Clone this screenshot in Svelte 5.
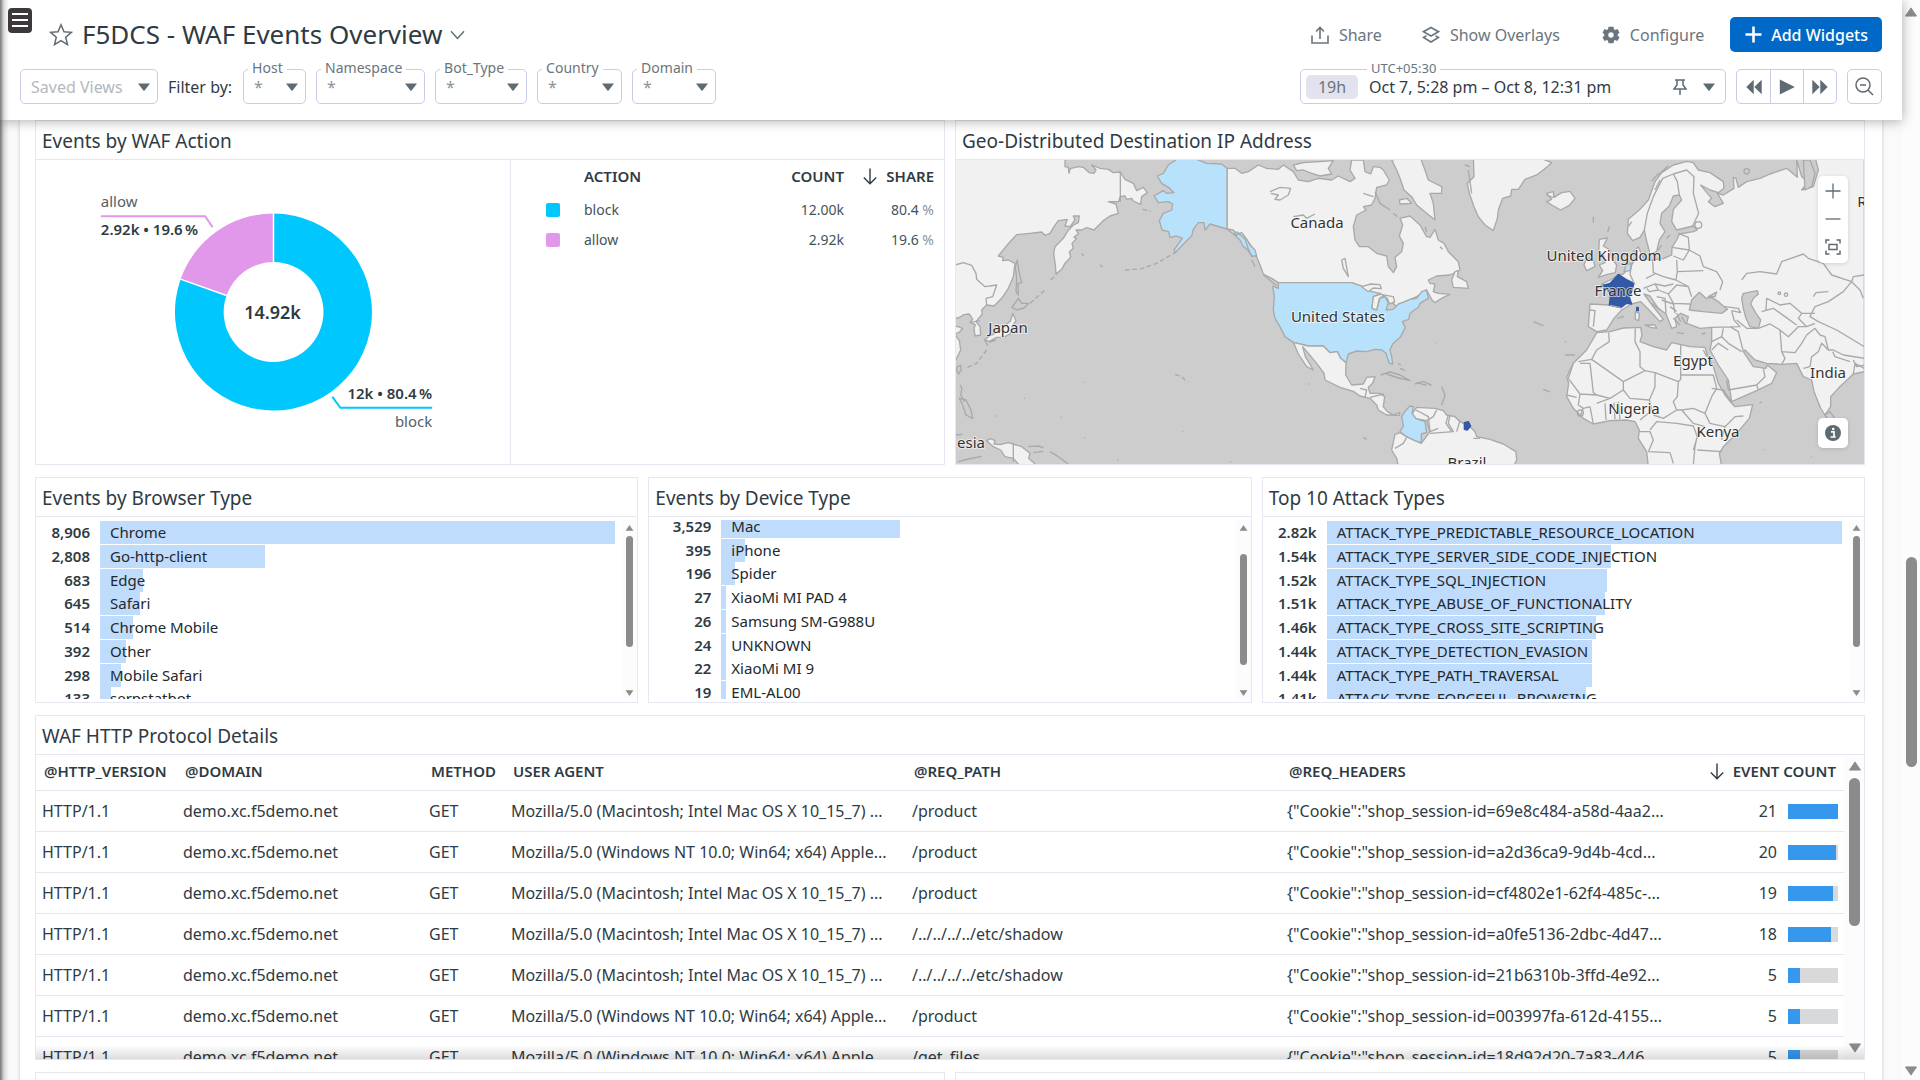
<script>
  const filters = [
    { name: 'Host', cls: 'w-host' },
    { name: 'Namespace', cls: 'w-namespace' },
    { name: 'Bot_Type', cls: 'w-bot' },
    { name: 'Country', cls: 'w-country' },
    { name: 'Domain', cls: 'w-domain' }
  ];

  const toplists = [
    {
      title: 'Events by Browser Type',
      cls: 'browser',
      items: [
        ['8,906', 'Chrome', 100],
        ['2,808', 'Go-http-client', 32],
        ['683', 'Edge', 8.3],
        ['645', 'Safari', 7.8],
        ['514', 'Chrome Mobile', 6.4],
        ['392', 'Other', 5.1],
        ['298', 'Mobile Safari', 4],
        ['133', 'serpstatbot', 2.2]
      ]
    },
    {
      title: 'Events by Device Type',
      cls: 'device',
      items: [
        ['3,529', 'Mac', 35.2],
        ['395', 'iPhone', 4.7],
        ['196', 'Spider', 2.7],
        ['27', 'XiaoMi MI PAD 4', 1],
        ['26', 'Samsung SM-G988U', 1],
        ['24', 'UNKNOWN', 1],
        ['22', 'XiaoMi MI 9', 1],
        ['19', 'EML-AL00', 1]
      ]
    },
    {
      title: 'Top 10 Attack Types',
      cls: 'attack',
      items: [
        ['2.82k', 'ATTACK_TYPE_PREDICTABLE_RESOURCE_LOCATION', 100],
        ['1.54k', 'ATTACK_TYPE_SERVER_SIDE_CODE_INJECTION', 55.2],
        ['1.52k', 'ATTACK_TYPE_SQL_INJECTION', 54.4],
        ['1.51k', 'ATTACK_TYPE_ABUSE_OF_FUNCTIONALITY', 54.1],
        ['1.46k', 'ATTACK_TYPE_CROSS_SITE_SCRIPTING', 52.2],
        ['1.44k', 'ATTACK_TYPE_DETECTION_EVASION', 51.4],
        ['1.44k', 'ATTACK_TYPE_PATH_TRAVERSAL', 51.4],
        ['1.41k', 'ATTACK_TYPE_FORCEFUL_BROWSING', 50.4]
      ]
    }
  ];

  const mac = 'Mozilla/5.0 (Macintosh; Intel Mac OS X 10_15_7) ...';
  const win = 'Mozilla/5.0 (Windows NT 10.0; Win64; x64) Apple...';
  const rows = [
    [mac, '/product', '69e8c484-a58d-4aa2...', 21],
    [win, '/product', 'a2d36ca9-9d4b-4cd...', 20],
    [mac, '/product', 'cf4802e1-62f4-485c-...', 19],
    [mac, '/../../../../etc/shadow', 'a0fe5136-2dbc-4d47...', 18],
    [mac, '/../../../../etc/shadow', '21b6310b-3ffd-4e92...', 5],
    [win, '/product', '003997fa-612d-4155...', 5],
    [win, '/get_files', '18d92d20-7a83-446...', 5]
  ];
  const cookie = '{"Cookie":"shop_session-id=';

  const labels = [
    ['Canada', 361, 68], ['United States', 382, 162], ['Japan', 52, 173], ['esia', 15, 288],
    ['United Kingdom', 648, 101], ['France', 662, 136], ['Egypt', 737, 206], ['India', 872, 218],
    ['Nigeria', 678, 254], ['Kenya', 762, 277], ['Brazil', 511, 308], ['Russia', 924, 47]
  ];
</script>

{#snippet caret()}
  <svg class="caret" width="12" height="8" viewBox="0 0 12 8" aria-hidden="true"><path d="M0 0.5h12L6.6 7.4a.8.8 0 0 1-1.2 0z" fill="#5f6b73" /></svg>
{/snippet}

{#snippet downArrow()}
  <svg class="sort" width="14" height="17" viewBox="0 0 14 17" aria-hidden="true"><path d="M7 0.5v15M0.8 9.6L7 15.8l6.200-6.200" fill="none" stroke="#2f3b44" stroke-width="1.400" /></svg>
{/snippet}

{#snippet bar(cls)}
  <div class="sbar {cls}" aria-hidden="true">
    <svg viewBox="0 0 10 8"><path d="M5 0.6L9.600 7.400H0.4z" fill="#8b8b8b" stroke="#8b8b8b" stroke-width=".8" stroke-linejoin="round" /></svg>
    <div class="track"><div class="thumb"></div></div>
    <svg viewBox="0 0 10 8"><path d="M5 7.400L9.600 0.6H0.4z" fill="#8b8b8b" stroke="#8b8b8b" stroke-width=".8" stroke-linejoin="round" /></svg>
  </div>
{/snippet}

<div class="page">
  <div class="app">
    <header>
      <button class="burger" aria-label="Menu">
        <svg width="24" height="25" viewBox="0 0 24 25"><rect width="24" height="25" rx="4" fill="#3d383c" /><path d="M4 6h16M4 12h16M4 18h16" stroke="#fff" stroke-width="2" /></svg>
      </button>
      <div class="bar1">
        <div class="heading">
          <svg width="24" height="24" viewBox="0 0 24 24" aria-hidden="true"><path d="M12 1.800l3 7 7.400.5-5.700 4.900 1.800 7.400L12 17.600l-6.500 4 1.800-7.400L1.600 9.300 9 8.800z" fill="none" stroke="#5f6b73" stroke-width="1.500" /></svg>
          <h1>F5DCS - WAF Events Overview</h1>
          <svg class="chev" width="15" height="10" viewBox="0 0 15 10" aria-hidden="true"><path d="M1 1.200l6.500 7.200L14 1.200" fill="none" stroke="#5f6b73" stroke-width="1.400" /></svg>
        </div>
        <div class="actions">
          <button class="ghost">
            <svg width="18" height="18" viewBox="0 0 18 18"><path d="M1 9.500V17h16V9.500M9 13V1.500M5 5.500l4-4 4 4" fill="none" stroke="currentColor" stroke-width="1.600" /></svg>
            Share
          </button>
          <button class="ghost g2">
            <svg width="18" height="18" viewBox="0 0 18 18"><path d="M9 1.500l7.500 4.200L9 10 1.500 5.700zM4.500 9.600l-3 1.900L9 16l7.500-4.500-3-1.900" fill="none" stroke="currentColor" stroke-width="1.600" /></svg>
            Show Overlays
          </button>
          <button class="ghost g3">
            <svg width="18" height="18" viewBox="0 0 18 18"><path fill-rule="evenodd" fill="currentColor" d="M6.500 0.800h5l.5 2.400 1.100.7 2.400-.8 2 3.600-1.800 1.600v1.400l1.800 1.600-2 3.600-2.400-.8-1.100.7-.5 2.400h-5L6 14.800l-1.100-.7-2.400.8-2-3.600 1.800-1.600V8.300L.5 6.700l2-3.600 2.400.8L6 3.200zM9 6.300a2.700 2.700 0 1 0 0 5.400 2.700 2.700 0 0 0 0-5.400z" /></svg>
            Configure
          </button>
          <button class="primary">
            <svg width="17" height="17" viewBox="0 0 17 17"><path d="M8.500 0.500v16M0.500 8.500h16" stroke="#fff" stroke-width="2.600" /></svg>
            Add Widgets
          </button>
        </div>
      </div>
      <div class="bar2">
        <div class="filters">
          <div class="field saved">
            <select aria-label="Saved Views"><option>Saved Views</option></select>
            {@render caret()}
          </div>
          <span class="by">Filter by:</span>
          {#each filters as f}
            <div class="field {f.cls}">
              <label for={f.name}>{f.name}</label>
              <select id={f.name}><option>*</option></select>
              {@render caret()}
            </div>
          {/each}
        </div>
        <div class="time">
          <div class="range">
            <span class="tz">UTC+05:30</span>
            <span class="dur">19h</span>
            <button class="dates">Oct 7, 5:28 pm – Oct 8, 12:31 pm</button>
            <button class="pin" aria-label="Pin time frame">
              <svg width="14" height="16" viewBox="0 0 14 16"><path d="M2 1h10M4 1v5L1 10h12L10 6V1M7 10v6" fill="none" stroke="#5f6b73" stroke-width="1.500" /></svg>
            </button>
            {@render caret()}
          </div>
          <div class="group">
            <button aria-label="Back"><svg width="16" height="16" viewBox="0 0 16 16"><path d="M7.700 0.800v14.400L0.300 8zM15.700 0.800v14.400L8.300 8z" fill="#5f6b73" /></svg></button>
            <button aria-label="Play"><svg width="16" height="16" viewBox="0 0 16 16"><path d="M0.800 0.500L15.800 8 0.800 15.500z" fill="#5f6b73" /></svg></button>
            <button aria-label="Forward"><svg width="16" height="16" viewBox="0 0 16 16"><path d="M0.300 0.800v14.400L7.700 8zM8.300 0.800v14.400L15.700 8z" fill="#5f6b73" /></svg></button>
          </div>
          <button class="zoom" aria-label="Zoom out">
            <svg width="19" height="19" viewBox="0 0 19 19"><path d="M8 1a7 7 0 1 1 0 14A7 7 0 0 1 8 1zM13 13l5 5M5 8h6" fill="none" stroke="#5f6b73" stroke-width="1.500" /></svg>
          </button>
        </div>
      </div>
    </header>

    <main>
      <div class="board">
        <div class="grid two">
          <section class="panel">
            <h2>Events by WAF Action</h2>
            <div class="waf">
              <svg class="donut" viewBox="0 0 475 304" role="img" aria-label="Events by action">
                <path d="M238 53.300A98.700 98.700 0 1 1 144.900 119.100L190.900 135.400A50 50 0 1 0 238 102z" fill="#00c8ff" />
                <path d="M144.900 119.100A98.700 98.700 0 0 1 238 53.300V102A50 50 0 0 0 190.900 135.400z" fill="#e198ea" />
                <path d="M238 52v50M144 118.800l47 16.600" stroke="#fff" stroke-width="1.500" />
                <path d="M65 56h104.500l7.500 11" fill="none" stroke="#e198ea" stroke-width="2" />
                <path d="M397 248h-92l-8-11" fill="none" stroke="#00c8ff" stroke-width="2" />
                <text class="name" x="65" y="47">allow</text>
                <text class="val" x="65" y="75">2.92k • 19.6&#8201;%</text>
                <text class="val end" x="397" y="239">12k • 80.4&#8201;%</text>
                <text class="name end" x="397" y="267">block</text>
                <text class="total" x="237" y="159">14.92k</text>
              </svg>
              <div class="legend">
                <table>
                  <thead>
                    <tr><th class="sw"></th><th class="l">ACTION</th><th class="cnt">COUNT</th><th class="shr">{@render downArrow()}SHARE</th></tr>
                  </thead>
                  <tbody>
                    <tr><td class="sw"><i class="cyan"></i></td><td class="l">block</td><td class="cnt">12.00k</td><td class="shr">80.4 <span>%</span></td></tr>
                    <tr><td class="sw"><i class="pink"></i></td><td class="l">allow</td><td class="cnt">2.92k</td><td class="shr">19.6 <span>%</span></td></tr>
                  </tbody>
                </table>
              </div>
            </div>
          </section>

          <section class="panel">
            <h2>Geo-Distributed Destination IP Address</h2>
            <div class="map">
              <svg viewBox="0 0 908 304" preserveAspectRatio="xMidYMid slice" role="img" aria-label="World map">
                <g class="land" transform="translate(-6 -10) scale(.33333)">
                  <path d="M0 20H345V50L355 52 357 70 361 56 385 50 400 52 418 68 432 70 438 60 425 45 450 55 475 58 490 68 511 66 525 88 550 100 560 122 580 112 592 128 575 140 572 163 550 153 545 145 530 148 525 138 511 140 505 155 475 155 498 162 505 190 480 198 460 212 432 240 410 233 395 240 378 240 386 250 372 262 380 265 366 280 370 295 358 305 362 322 345 340 335 358 318 372 316 345 311 310 315 290 340 265 352 245 370 225 385 218 388 198 370 198 375 210 360 230 345 228 352 208 325 212 312 230 300 250 285 256 275 246 240 250 200 254 180 275 145 318 160 322 158 332 175 330 195 340 190 380 175 415 155 445 132 468 110 465 95 480 97 492 78 515 90 530 92 555 75 558 72 535 76 524 60 517 68 508 58 492 42 494 25 504H0z" />
                  <path d="M0 530L25 530 38 536 26 548 14 552 28 572 32 600 20 625 10 640 0 650z" />
                  <path d="M188 490L198 512 186 530 180 552 160 562 140 562 118 574 104 570 115 560 152 542 168 525 182 512z" />
                  <path d="M110 872L122 866 135 872 132 882 150 884 175 878 190 882 215 890 240 910 236 925 262 948H210L190 925 165 920 152 900 130 890z" />
                  <path d="M831 55L855 55 875 70 895 65 925 45 950 55 985 58 1000 45 1030 65 1045 90 1075 95 1105 85 1145 90 1165 78 1200 95 1215 85 1200 60 1205 30 1240 30 1245 65 1262 72 1270 50 1290 52 1300 60 1318 90 1310 105 1280 112 1275 145 1265 165 1240 170 1248 180 1220 195 1210 230 1215 270 1228 290 1255 290 1280 310 1310 318 1315 350 1330 368 1340 350 1335 322 1355 305 1360 280 1348 258 1358 225 1350 205 1380 198 1410 225 1430 260 1440 262 1455 238 1465 270 1482 280 1495 305 1525 335 1530 360 1500 375 1460 378 1435 390 1440 400 1455 402 1450 425 1465 430 1500 433 1480 442 1455 458 1446 450 1430 420 1400 440 1365 455 1340 470 1310 440 1265 425 1205 398H985L965 385 940 372 930 345 920 320 905 290 880 255 831 237z" />
                  <path d="M1030 45L1060 38 1110 35 1150 32 1135 55 1145 72 1110 78 1085 70 1060 60 1040 62zM1380 20H1410L1425 60 1435 90 1475 110 1475 130 1440 130 1450 160 1455 210 1430 190 1400 165 1385 140 1362 120 1350 85 1340 60 1325 30zM1348 150L1370 145 1385 160 1350 162z" />
                  <path d="M1505 390L1515 365 1525 362 1522 380 1550 395 1555 415 1510 412z" fill="#d2d2d2" />
                  <path class="us" d="M655 45L680 28H740L770 40 815 42 831 55V237L800 228 780 222 765 240 762 218 745 218 730 238 725 258 710 272 695 288 675 308 672 300 697 265 680 258 660 262 656 245 636 240 628 212 640 190 665 180 668 162 655 155 625 158 612 138 640 122 650 130 672 128 655 112 635 100 622 78 640 70z" />
                  <path class="us" d="M831 237L850 240 858 256 875 248 890 268 900 285 915 300 920 318 905 318 892 298 880 290 870 270 850 252z" />
                  <path class="us" d="M985 398H1205L1235 408 1265 425 1292 430 1270 440 1266 475 1280 478 1290 445 1305 440 1315 458 1308 480 1330 478 1345 462 1365 455 1380 448 1400 445 1415 425 1430 420 1435 445 1410 460 1405 472 1380 490 1376 508 1357 515 1366 532 1352 560 1328 582 1320 600 1325 620 1328 642 1318 640 1308 610 1296 600 1275 598 1250 605 1220 603 1195 612 1188 638 1172 625 1162 605 1140 608 1120 588 1075 588 1030 577 1005 560 990 530 975 505 970 480 973 440 968 408 985 415z" />
                  <path d="M1235 410L1262 402 1290 404 1294 416 1270 414 1255 425zM1266 475L1270 440 1292 432 1302 436 1288 446 1280 480zM1296 434L1330 440 1334 456 1318 462 1312 445z" />
                  <path d="M1030 577L1075 588H1120L1140 608 1162 605 1172 625 1188 638 1187 675 1205 705 1240 702 1250 682 1275 680 1268 700 1255 712 1260 730 1290 730 1304 740 1300 770 1312 785 1330 795 1350 788 1348 796 1310 795 1285 780 1280 765 1260 745 1230 738 1210 724 1170 712 1125 690 1122 670 1100 640 1075 610 1058 590 1066 620 1090 660 1070 650 1045 612z" />
                  <path d="M1335 853L1350 848 1370 860 1395 872 1414 880 1440 845 1430 812 1398 806 1386 792 1400 772 1455 775 1480 782 1490 795 1515 800 1530 815 1560 830 1575 845 1580 860 1620 868 1660 882 1698 905 1700 930 1690 950H1345L1340 925 1325 900z" />
                  <path class="us" d="M1380 768L1366 782 1355 800 1360 828 1350 845 1370 860 1395 872 1414 878V852L1430 847 1425 815 1398 806 1386 790 1390 770z" />
                </g>
                <g class="line" transform="translate(-6 -10) scale(.33333)">
                  <path d="M511 66V155M15 345L40 338 65 346 78 370 80 388 105 410 140 405 128 440 108 445 110 465M60 517L90 512M190 882V935" />
                  <path d="M960 125L990 112 1022 115 1015 135 990 150 975 148 985 135 962 130M1030 200L1060 195 1070 205 1095 192M1175 330L1185 325 1195 380 1180 355zM1292 675L1320 666 1350 675 1380 692 1345 684 1310 672M1395 702L1420 694 1445 706M1345 640l8 5M1350 655l14 6M1275 125L1290 160 1320 180M1330 190l12 10M1240 130l30 10" />
                  <path d="M1230 715L1250 720 1245 742M1260 742L1302 732M1335 895L1360 880 1370 862M1460 780L1450 800 1430 812M1500 795L1495 820 1510 845 1440 850M1530 812L1520 845" />
                  <path d="M202 330L196 350 200 385 198 425 205 435 204 400 215 398 206 360zM205 445L215 460 236 460 222 474 200 480 186 472zM105 570l8 18M118 576l20-6M22 650l10-4 2 12-8 14-6-10zM30 705l6 10-4 20 12 20M28 745l20 5 15 30 5 25-20-10-10-30zM18 855l20-2M25 935l30-8 40-8M235 890l30-2 15 5M250 908l30-4M300 905l25 15 30 22M860 245l25 22 10 30 12 25M905 330l10 20M940 375l40 32M1240 862l10 6" stroke-width="6" />
                  <path d="M240 460L285 420M302 390L320 372M110 600L80 640 45 655M450 345l8 6M525 360L575 356 620 340 680 305M578 178l24 5M675 673L695 680 712 697M395 310l6 8M400 697h3M222 745h3M135 798h3M332 802h3M402 864h3M697 845h3M502 930h3M840 935h3M1076 702h3" stroke-dasharray="14 8" stroke-width="5" />
                </g>
                <g class="land" transform="translate(454 -10) scale(.33333)">
                  <path d="M190 20H380L425 38 410 52 380 75 345 88 325 118 305 118 302 138 278 145 265 180 262 205 250 242 225 225 205 200 192 170 178 130 172 100 192 80z" />
                  <path d="M410 130L430 125 432 142 455 128 480 124 495 145 478 166 452 180 425 165 410 155 425 148z" />
                  <path d="M568 268L592 264 580 288 600 300 605 325 620 345 616 368 590 374 565 382 578 362 568 345 585 338 582 318 566 308z" />
                  <path d="M528 328L548 322 555 350 530 362 522 345z" fill="#dedede" />
                  <path d="M1363 20H1215L1225 60 1210 110 1175 120 1195 95 1175 80 1160 30 1162 82 1130 55 1080 72 1050 85 1010 95 985 112 978 85 970 82 972 115 940 135 922 130 940 160 915 170 895 155 905 145 888 125 872 105 900 120 925 128 942 115 940 95 900 68 865 60 850 38 830 34 790 45 755 68 735 95 715 150 690 178 655 208 652 250 668 272 690 262 703 240 708 265 720 312 740 305 748 270 765 245 750 220 755 190 778 168 790 138 808 135 815 150 790 178 785 215 800 240 850 228 862 240 850 245 808 252 800 270 786 292 785 315 760 326 722 330 700 325 685 290 672 305 680 320 665 345 640 372 625 375 600 390 575 402 600 420 600 465 540 462 535 530 560 545 590 540 612 505 635 480 665 462 692 455 712 475 750 515 760 508 726 465 702 432 720 438 745 475 768 492 785 535 800 530 795 505 812 490 835 500 830 520 870 535 905 532 905 575 900 600 925 645 955 690 960 722 965 755 1040 722 1085 700 1100 668 1072 645 1068 655 1030 650 1000 605 1005 600 1035 630 1070 640 1115 643 1160 640 1180 680 1205 690 1212 725 1232 775 1245 795 1262 770 1262 740 1285 715 1330 672 1363 665z" />
                  <path d="M560 548L600 545 640 534 692 532 696 555 690 575 730 590 770 600 785 578 840 590 885 592 892 615 910 650 925 700 945 735 965 760 975 770 1028 764 1018 805 980 850 940 890 928 910 935 950H715L710 905 685 865 688 840 675 815 650 810 600 812 550 822 520 805 490 775 470 740 476 700 470 682 490 640 530 600z" />
                  <path d="M705 525l30 0 5 10-18-3zM676 485l12 5-2 22-10-4z" />
                  <path class="sea" d="M838 480L845 450 868 427 888 445 905 442 925 455 952 478 935 490 880 485zM895 440l25-14-5 14zM1000 430L1042 422 1045 432 1030 445 1022 462 1038 490 1052 510 1045 535 1020 530 1008 505 1000 475 995 445zM1180 30L1200 30 1215 70 1205 110 1185 120z" />
                  <path class="fr" d="M625 373L648 388 672 400 665 425 658 442 665 462 650 460 632 473 598 465 602 432 590 415 572 408 600 400zM680 472h5v10h-5zM163 818L175 815 182 828 172 840 163 838z" />
                  <path class="us" d="M648 345L664 340 660 362 642 365z" />
                </g>
                <g class="line" transform="translate(454 -10) scale(.33333)">
                  <path d="M703 240L712 190 730 140 758 85 790 72 802 95 808 135M790 72L830 60 852 80 850 130 866 190 848 228M805 250L835 262 838 300 820 330 790 318M786 292L838 300 870 318 880 350 920 365 938 395 930 420M800 330L802 365 880 362M728 330L730 368 760 380 798 390 802 365M708 385L735 372M665 345L660 372 672 400M700 415L735 402 745 420 718 425 710 415M735 402L765 408 790 402M745 420L775 432 800 405 835 410 845 440M775 432L790 460 840 462M740 440L765 445 768 490M755 450L790 462M790 460L795 490M540 480L555 482 550 530M600 466L632 473M835 410L798 390M945 470L985 475 992 488 965 482M965 482L972 510 990 530 905 532M940 535L935 560 905 575M935 560L955 580 995 605M960 530L985 545 1000 605M980 510L1010 535 1045 535M1045 535L1080 522 1110 540 1115 605 1125 625 1115 643M1110 540L1135 560 1165 530 1190 530 1215 520M1115 605L1155 608 1175 580 1190 555 1215 535 1230 555M1230 555L1245 560 1255 600 1235 580 1225 605 1205 620 1200 650 1180 655M1255 600L1270 600 1300 615 1363 625M1268 605L1275 620 1320 635M1330 630L1340 650 1363 645M1330 672L1335 640 1363 655M995 390L1010 370 1050 365 1100 372 1115 335 1180 312 1195 325 1240 340 1265 375 1325 395 1330 380 1363 375M1325 395L1350 420 1360 445M1325 395L1300 425 1255 455 1215 470 1200 500 1225 515 1280 540 1363 590M1068 480L1070 445 1110 465 1140 460 1175 490 1215 490M1055 485L1090 475 1125 500 1160 525M1175 490L1165 505 1190 530M1210 440L1218 428 1255 425" />
                  <path d="M596 548L598 575 560 600 545 628 505 635M540 640L550 728 560 735M510 640H540M545 628L640 695 705 662M640 695L640 720 600 745 560 735 510 732 475 685H475M490 640L475 685M676 535L675 575 690 605 690 650 705 662M705 662L735 668 805 695 812 688V585M812 675H910M735 668L735 710 718 750M640 720L660 745 718 750 725 775 715 790 690 810M805 695L802 740 790 755 800 780 760 805 730 795M910 675L920 715 905 740 885 790 850 775 815 780 800 780M905 715L940 720 965 755M885 790L900 820 945 830 975 800 1000 798M945 830L935 870M815 780L850 820 885 830M720 840L740 815 800 820 850 828 862 860 850 900M885 830L860 865 855 890 850 945M862 900L935 905M688 845L720 845 730 870 715 905M715 905L780 908 790 940M510 732L505 765 520 775 540 770M520 775L510 800M540 770L550 822M585 760L588 810M612 758L615 808M625 755L630 808M560 760L600 745M470 735L500 742M950 690L955 720 1040 705 1045 720M1040 705L1065 680 1060 655M905 600L925 580 955 600M880 600L890 620M18 780L55 800 60 845 85 835M115 795L108 820 125 845" />
                  <path d="M700 325l5-20M745 300l10-15M770 265l10-10M735 120l15-30M655 230l10-15M725 95l20-25M745 75l30-28M550 200v18M598 230l-5 15M410 135l20 8M90 290l8 8M45 230l5 15M622 505l20-6M800 548l22 3M875 552l12-3M800 490l12 25M790 505l20 20M815 500l12 22M780 470l20 14M725 460l25 20M20 698l30 8M95 710l10 25-10 30M465 615l30 0M400 718l20 8M370 515l30 12M465 575h3M75 578h3M190 865l20 0M175 60l10 70M165 45l15 5" stroke-width="5" />
                  <circle cx="1128" cy="434" r="5" /><circle cx="1108" cy="430" r="4" /><circle cx="1010" cy="64" r="8" /><circle cx="865" cy="225" r="10" /><circle cx="511" cy="789" r="9" /><path d="M1245 795l15-10 14 20-14 10zM1048 757h8M1062 899h3M1203 922h3" />
                </g>
                {#each labels as [t, x, y]}
                  <text {x} {y}>{t}</text>
                {/each}
              </svg>
              <div class="mapctl">
                <button aria-label="Zoom in"><svg width="16" height="16" viewBox="0 0 16 16"><path d="M8 .5v15M.5 8h15" stroke="#5f6b73" stroke-width="1.300" /></svg></button>
                <button aria-label="Zoom out map"><svg width="16" height="16" viewBox="0 0 16 16"><path d="M.5 8h15" stroke="#5f6b73" stroke-width="1.300" /></svg></button>
                <button aria-label="Fit map"><svg width="16" height="16" viewBox="0 0 16 16"><path d="M1 4.500V1h3.500M11.500 1H15v3.500M15 11.500V15h-3.500M4.500 15H1v-3.500M4 5.500h8v5H4z" fill="none" stroke="#5f6b73" stroke-width="1.500" /></svg></button>
              </div>
              <button class="info" aria-label="Map information">
                <svg width="16" height="16" viewBox="0 0 16 16"><circle cx="8" cy="8" r="8" fill="#5f6b73" /><path d="M6 6.800h3v5.200M5.500 12h5.200" fill="none" stroke="#fff" stroke-width="1.700" /><circle cx="8.200" cy="4" r="1.300" fill="#fff" /></svg>
              </button>
            </div>
          </section>
        </div>

        <div class="grid three">
          {#each toplists as l}
            <section class="panel">
              <h2>{l.title}</h2>
              <div class="top {l.cls}">
                <ul>
                  {#each l.items as [n, name, w]}
                    <li><b>{n}</b><div class="hbar"><i style:width="{w}%"></i><span>{name}</span></div></li>
                  {/each}
                </ul>
                {@render bar('small')}
              </div>
            </section>
          {/each}
        </div>

        <section class="panel">
          <h2>WAF HTTP Protocol Details</h2>
          <div class="details">
            <table>
              <colgroup><col class="c1" /><col class="c2" /><col class="c3" /><col class="c4" /><col class="c5" /><col class="c6" /><col class="c7" /></colgroup>
              <thead>
                <tr><th>@HTTP_VERSION</th><th>@DOMAIN</th><th>METHOD</th><th>USER AGENT</th><th>@REQ_PATH</th><th>@REQ_HEADERS</th><th class="num">{@render downArrow()}EVENT COUNT</th></tr>
              </thead>
              <tbody>
                {#each rows as [ua, path, id, n]}
                  <tr>
                    <td>HTTP/1.1</td><td>demo.xc.f5demo.net</td><td>GET</td><td>{ua}</td><td>{path}</td><td>{cookie}{id}</td>
                    <td><div class="count">{n}<span class="meter"><i style:width="{(n / 21) * 100}%"></i></span></div></td>
                  </tr>
                {/each}
              </tbody>
            </table>
            {@render bar('large')}
          </div>
        </section>

        <div class="grid two">
          <section class="panel"><div class="blank"></div></section>
          <section class="panel"><div class="blank"></div></section>
        </div>
      </div>
    </main>
  </div>
  {@render bar('pagebar')}
</div>

<style>
  :global(body) {
    margin: 0;
    background: #fff;
  }
  .page {
    display: flex;
    height: 100vh;
    overflow: hidden;
    font: 16px/24px 'Noto Sans', sans-serif;
    color: #2f3b44;
  }
  .page::before {
    content: '';
    position: absolute;
    inset: 0 auto 0 0;
    width: 9px;
    z-index: 5;
    background: linear-gradient(90deg, #0008, #0002 45%, #0000);
    pointer-events: none;
  }
  .app {
    flex: 1;
    min-width: 0;
    display: flex;
    flex-direction: column;
  }
  button, select {
    font: inherit;
    color: inherit;
    background: none;
    border: 0;
    padding: 0;
    margin: 0;
  }
  button {
    display: flex;
    align-items: center;
    justify-content: center;
    white-space: nowrap;
  }
  svg {
    display: block;
    flex: none;
  }
  header {
    position: relative;
    z-index: 3;
    box-sizing: border-box;
    height: 120px;
    padding: 17px 20px 0;
    display: flex;
    flex-direction: column;
    gap: 17px;
    background: #fff;
    box-shadow: 0 1px 12px #0005;
  }
  .burger {
    position: absolute;
    left: 8px;
    top: 8px;
    z-index: 6;
  }
  .bar1, .bar2, .heading, .actions, .filters, .time {
    display: flex;
    align-items: center;
  }
  .bar1, .bar2 {
    justify-content: space-between;
    height: 35px;
  }
  .heading {
    padding-left: 29px;
  }
  h1 {
    margin: 0 8px 0 9px;
    font-size: 26px;
    line-height: 35px;
    font-weight: 400;
  }
  .ghost {
    gap: 10px;
    color: #6a757d;
    margin-right: 40px;
  }
  .g2 {
    margin-right: 42px;
  }
  .g3 {
    margin-right: 26px;
  }
  .primary {
    gap: 9px;
    height: 35px;
    padding: 0 14px 0 15px;
    border-radius: 5px;
    background: #0068c6;
    color: #fff;
    font-weight: 500;
  }
  .filters {
    gap: 10px;
  }
  .by {
    margin-right: 1px;
  }
  .field {
    position: relative;
    height: 35px;
    box-sizing: border-box;
    border: 1px solid #c9cce6;
    border-radius: 5px;
    display: flex;
    align-items: center;
    padding: 0 7px 0 10px;
  }
  .field select {
    flex: 1;
    min-width: 0;
    appearance: none;
    color: #8a939a;
  }
  .field.saved select {
    color: #b3b8bc;
  }
  .field label, .tz {
    position: absolute;
    left: 4px;
    top: -14px;
    padding: 0 4px;
    background: #fff;
    font-size: 14px;
    color: #6a757d;
  }
  .tz {
    left: 66px;
    font-size: 13px;
  }
  .saved { width: 138px; }
  .w-host { width: 63px; }
  .w-namespace { width: 109px; }
  .w-bot { width: 92px; }
  .w-country { width: 85px; }
  .w-domain { width: 84px; }
  .time {
    gap: 10px;
  }
  .range {
    position: relative;
    box-sizing: border-box;
    width: 426px;
    height: 35px;
    border: 1px solid #c9cce6;
    border-radius: 5px;
    display: flex;
    align-items: center;
    padding: 0 10px 0 5px;
  }
  .dur {
    width: 52px;
    border-radius: 5px;
    background: #e2e3ee;
    color: #6a757d;
    text-align: center;
    margin-right: 11px;
  }
  .pin {
    margin: 0 16px 0 auto;
  }
  .group {
    display: flex;
    border: 1px solid #c9cce6;
    border-radius: 5px;
  }
  .group button {
    width: 33px;
    height: 33px;
  }
  .group button + button {
    border-left: 1px solid #c9cce6;
  }
  .zoom {
    width: 35px;
    height: 35px;
    border: 1px solid #c9cce6;
    border-radius: 5px;
  }
  main {
    flex: 1;
    min-height: 0;
    overflow: hidden;
    background: #fafafa;
    padding: 0 20px;
  }
  .board {
    background: #fff;
    padding: 0 17px 0 15px;
    box-shadow: 0 0 4px #0003;
    display: flex;
    flex-direction: column;
    gap: 12px;
  }
  .grid {
    display: grid;
    gap: 10px;
  }
  .two { grid-template-columns: 1fr 1fr; }
  .three { grid-template-columns: 1fr 1fr 1fr; }
  .panel {
    min-width: 0;
    border: 1px solid #e6e7f0;
  }
  h2 {
    margin: 0;
    padding: 3px 6px 0;
    font-size: 19px;
    line-height: 35px;
    font-weight: 400;
    border-bottom: 1px solid #e6e7f0;
  }
  .waf {
    display: grid;
    grid-template-columns: 474fr 434fr;
  }
  .donut {
    width: 100%;
    height: 304px;
  }
  .donut text {
    font-size: 15px;
    fill: #2f3b44;
  }
  .donut .name { fill: #55616a; }
  .donut .val { font-weight: 600; }
  .donut .end { text-anchor: end; }
  .donut .total {
    font-size: 18px;
    font-weight: 600;
    text-anchor: middle;
  }
  .legend {
    border-left: 1px solid #e6e7f0;
  }
  table {
    width: 100%;
    table-layout: fixed;
    border-collapse: collapse;
  }
  th {
    font-size: 15px;
    font-weight: 600;
    text-align: left;
    white-space: nowrap;
  }
  .legend th, .legend td { padding: 0; }
  .legend th {
    height: 31px;
    padding-bottom: 4px;
  }
  .legend td {
    height: 30px;
    font-size: 14px;
    color: #46525b;
  }
  .legend .sw {
    width: 38px;
    padding-left: 35px;
  }
  .legend .cnt {
    width: 100px;
    text-align: right;
  }
  .legend .shr {
    width: 90px;
    padding-right: 10px;
    text-align: right;
  }
  .shr span { color: #8a939a; }
  .sw i {
    display: block;
    width: 14px;
    height: 14px;
    border-radius: 2px;
  }
  .cyan { background: #00c8ff; }
  .pink { background: #e198ea; }
  .sort {
    display: inline-block;
    vertical-align: -3px;
    margin-right: 9px;
  }
  .map {
    position: relative;
    height: 304px;
    overflow: hidden;
    background: #cdcdcd;
  }
  .map > svg {
    width: 100%;
    height: 100%;
  }
  .land path {
    fill: #f1f1f1;
    stroke: #a9a9a9;
    stroke-width: 4;
    stroke-linejoin: round;
  }
  .land .us { fill: #b8e2fb; }
  .land .fr { fill: #3359a5; stroke: #3359a5; }
  .land .sea { fill: #cdcdcd; }
  .line path, .line circle {
    fill: none;
    stroke: #a9a9a9;
    stroke-width: 4;
    stroke-linejoin: round;
  }
  .map text {
    font-size: 15px;
    text-anchor: middle;
    fill: #333;
    stroke: #fff9;
    stroke-width: 2px;
    paint-order: stroke;
  }
  .mapctl, .info {
    position: absolute;
    right: 16px;
    width: 30px;
    border-radius: 5px;
    background: #fff;
    box-shadow: 0 1px 4px #0002;
  }
  .mapctl {
    top: 16px;
    padding: 1px 0 2px;
  }
  .mapctl button {
    width: 30px;
    height: 28px;
  }
  .info {
    bottom: 16px;
    height: 30px;
  }
  .top {
    display: flex;
    height: 179px;
    margin: 3px 0;
    overflow: hidden;
  }
  ul {
    flex: 1;
    min-width: 0;
    margin: 0 7px 0 0;
    padding: 0;
    list-style: none;
  }
  li {
    display: flex;
    gap: 10px;
    height: 24px;
    font-size: 15px;
    line-height: 24px;
  }
  li b {
    width: 54px;
    text-align: right;
    font-weight: 600;
  }
  .device b { width: 62px; }
  .device ul { margin-top: -6px; }
  .browser li:nth-child(4n + 3),
  .attack li:nth-child(4n + 3),
  .device li:nth-child(4n + 2) { height: 23px; }
  .hbar {
    position: relative;
    flex: 1;
    padding-left: 10px;
    white-space: nowrap;
    color: #22282c;
  }
  .hbar i {
    position: absolute;
    left: 0;
    top: 1px;
    height: 23px;
    background: #c0dcfd;
  }
  .hbar span { position: relative; }
  .sbar {
    flex: none;
    display: flex;
    flex-direction: column;
    align-items: center;
    box-sizing: border-box;
    background: #fcfcfc;
  }
  .track {
    flex: 1;
    width: 100%;
  }
  .thumb {
    margin: 0 auto;
    border-radius: 6px;
    background: #8b8b8b;
  }
  .small {
    width: 15px;
    padding: 5px 0 3px;
  }
  .small svg { width: 9px; height: 6px; }
  .small .track { padding-top: 5px; }
  .small .thumb { width: 7px; height: 111px; }
  .device .small .track { padding-top: 23px; }
  .large {
    width: 21px;
    padding: 6px 0;
  }
  .large svg { width: 12px; height: 10px; }
  .large .track { padding-top: 7px; }
  .large .thumb { width: 11px; height: 148px; }
  .pagebar {
    width: 18px;
    padding: 7px 0 4px;
  }
  .pagebar svg { width: 12px; height: 10px; }
  .pagebar .track { padding-top: 540px; }
  .pagebar .thumb { width: 11px; height: 210px; }
  .details {
    position: relative;
    display: flex;
    align-items: flex-start;
    height: 304px;
    overflow: hidden;
  }
  .details::after {
    content: '';
    position: absolute;
    inset: auto 0 0 0;
    height: 14px;
    background: linear-gradient(#0000, #0002);
  }
  .details table {
    flex: 1;
    min-width: 0;
  }
  .details .large { height: 304px; }
  .details th {
    height: 31px;
    padding: 0 8px 4px;
    border-bottom: 1px solid #e6e7f0;
  }
  .details td {
    height: 40px;
    padding: 0 6px;
    border-bottom: 1px solid #e6e7f0;
    white-space: nowrap;
    overflow: hidden;
  }
  .c1 { width: 141px; }
  .c2 { width: 246px; }
  .c3 { width: 82px; }
  .c4 { width: 401px; }
  .c5 { width: 375px; }
  .c6 { width: 399px; }
  .c7 { width: 164px; }
  .details .num { text-align: right; }
  .count {
    display: flex;
    align-items: center;
    justify-content: flex-end;
    gap: 11px;
  }
  .meter {
    width: 50px;
    height: 15px;
    background: #d8d9db;
  }
  .meter i {
    display: block;
    height: 100%;
    background: #3598ec;
  }
  .blank { height: 120px; }
</style>
